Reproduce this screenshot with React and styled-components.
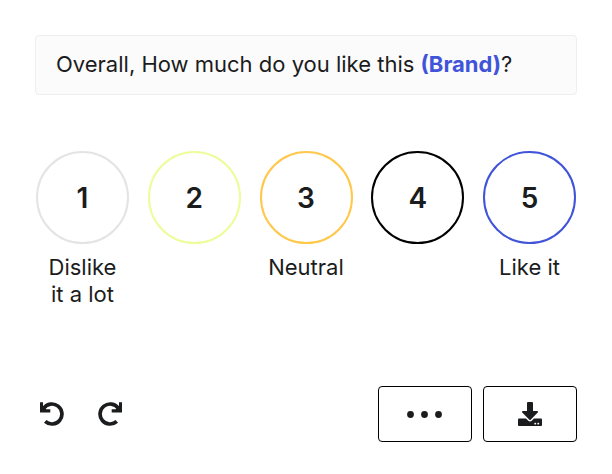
import React, { useState } from "react";
import styled, { createGlobalStyle } from "styled-components";
import { FaDownload } from "react-icons/fa";

const GlobalStyle = createGlobalStyle`
  *, *::before, *::after { box-sizing: border-box; }
  body {
    margin: 0;
    background: #ffffff;
    color: #1b1c1d;
    font-family: Inter, "Liberation Sans", sans-serif;
    font-size: 22px;
    font-weight: 400;
    line-height: 27px;
  }
`;

const Survey = styled.form`
  padding: 35px 35px 32px;
`;

const Question = styled.h1`
  margin: 0;
  padding: 15px 20px 16px;
  border: 1px solid #eeeeef;
  border-radius: 4px;
  background: #fbfbfb;
  font-size: 22px;
  font-weight: 400;
  line-height: 27px;
`;

const Brand = styled.strong`
  color: #4054d9;
  font-weight: 700;
`;

const Scale = styled.div`
  display: flex;
  justify-content: space-between;
  margin-top: 56px;
  padding: 0 1px;
`;

const Option = styled.label`
  display: grid;
  grid-template-columns: 93px;
  grid-template-rows: 93px auto;
  row-gap: 10px;
  cursor: pointer;
`;

const Circle = styled.input`
  grid-area: 1 / 1;
  appearance: none;
  width: 100%;
  height: 100%;
  margin: 0;
  border: 2px solid ${(p) => p.$color};
  border-radius: 50%;
  cursor: pointer;

  &:checked {
    background: #f4f5fd;
  }
`;

const Score = styled.span`
  grid-area: 1 / 1;
  place-self: center;
  font-size: 28px;
  font-weight: 600;
  line-height: 34px;
`;

const Caption = styled.span`
  padding: 0 6px;
  text-align: center;
`;

const Toolbar = styled.div`
  display: flex;
  align-items: center;
  justify-content: space-between;
  margin-top: 78px;
`;

const History = styled.div`
  display: flex;
  gap: 34px;
  padding-left: 5px;
`;

const Actions = styled.div`
  display: flex;
  gap: 11px;
`;

const IconButton = styled.button`
  display: flex;
  padding: 0;
  border: 0;
  background: none;
  color: inherit;
  cursor: pointer;
`;

const ActionButton = styled(IconButton)`
  align-items: center;
  justify-content: center;
  width: 94px;
  height: 56px;
  border: 1px solid #000000;
  border-radius: 4px;
`;

const FlippedIcon = styled.svg`
  transform: ${(p) => (p.$flip ? "scaleX(-1)" : "none")};
`;

function TurnArrow({ flip }) {
  return (
    <FlippedIcon $flip={flip} width="24" height="24" viewBox="0 0 24 24" aria-hidden="true">
      <path d="M0 0.2h3v4.2L6.2 7.2H10.3v3.2H0z" fill="currentColor" />
      <path
        d="M3.8 6.2A10 10 0 1 1 5.2 19.4"
        fill="none"
        stroke="currentColor"
        strokeWidth="3.7"
      />
    </FlippedIcon>
  );
}

function Dots() {
  return (
    <svg width="36" height="8" viewBox="0 0 36 8" fill="currentColor" aria-hidden="true">
      <circle cx="3.5" cy="4.5" r="3.4" />
      <circle cx="17.5" cy="4.5" r="3.4" />
      <circle cx="31.5" cy="4.5" r="3.4" />
    </svg>
  );
}

const options = [
  { value: 1, color: "#e4e4e4", caption: "Dislike it a lot" },
  { value: 2, color: "#eefc9b" },
  { value: 3, color: "#ffc84a", caption: "Neutral" },
  { value: 4, color: "#000000" },
  { value: 5, color: "#4054d9", caption: "Like it" },
];

export default function App() {
  const [rating, setRating] = useState(null);

  return (
    <>
      <GlobalStyle />
      <Survey>
        <Question id="question">
          Overall, How much do you like this <Brand>(Brand)</Brand>?
        </Question>
        <Scale role="radiogroup" aria-labelledby="question">
          {options.map(({ value, color, caption }) => (
            <Option key={value}>
              <Circle
                type="radio"
                name="rating"
                value={value}
                $color={color}
                checked={rating === value}
                onChange={() => setRating(value)}
              />
              <Score>{value}</Score>
              {caption && <Caption>{caption}</Caption>}
            </Option>
          ))}
        </Scale>
        <Toolbar>
          <History>
            <IconButton type="button" aria-label="Undo">
              <TurnArrow />
            </IconButton>
            <IconButton type="button" aria-label="Redo">
              <TurnArrow flip />
            </IconButton>
          </History>
          <Actions>
            <ActionButton type="button" aria-label="More options">
              <Dots />
            </ActionButton>
            <ActionButton type="button" aria-label="Download">
              <FaDownload size={24} />
            </ActionButton>
          </Actions>
        </Toolbar>
      </Survey>
    </>
  );
}
